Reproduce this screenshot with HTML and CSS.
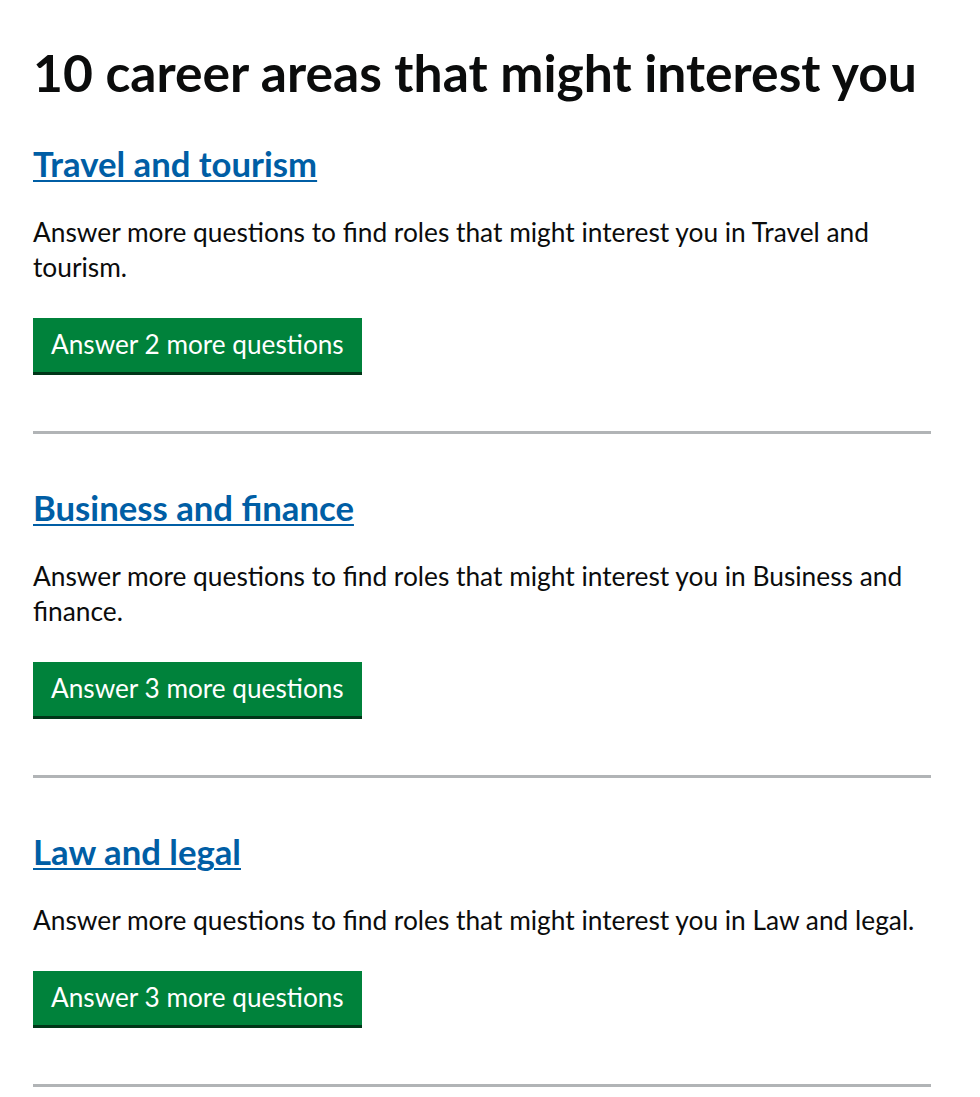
FILE: index.html
```html
<!DOCTYPE html>
<html lang="en">
<head>
<meta charset="utf-8">
<title>10 career areas that might interest you</title>
<link rel="stylesheet" href="styles.css">
</head>
<body>
<main class="page">
  <h1 class="title">10 career areas that might interest you</h1>

  <section class="area">
    <h2 class="area-heading"><a class="area-link" href="#">Travel and tourism</a></h2>
    <p class="area-text">Answer more questions to find roles that might interest you in Travel and tourism.</p>
    <a class="button" href="#">Answer 2 more questions</a>
  </section>
  <hr class="divider">

  <section class="area">
    <h2 class="area-heading"><a class="area-link" href="#">Business and finance</a></h2>
    <p class="area-text">Answer more questions to find roles that might interest you in Business and finance.</p>
    <a class="button" href="#">Answer 3 more questions</a>
  </section>
  <hr class="divider">

  <section class="area">
    <h2 class="area-heading"><a class="area-link" href="#">Law and legal</a></h2>
    <p class="area-text">Answer more questions to find roles that might interest you in Law and legal.</p>
    <a class="button" href="#">Answer 3 more questions</a>
  </section>
  <hr class="divider">
</main>
</body>
</html>
```

FILE: styles.css
```css
html, body {
  margin: 0;
  padding: 0;
  background: #ffffff;
}

body {
  font-family: Lato, "Liberation Sans", Arial, sans-serif;
  color: #0b0c0c;
}

.page {
  padding: 0 49px 0 33px;
  display: flex;
  flex-direction: column;
}

.title {
  font-size: 51.6px;
  line-height: 58px;
  font-weight: 700;
  margin: 43px 0 0;
}

.area {
  display: flex;
  flex-direction: column;
  align-items: flex-start;
  padding-top: 43px;
}

.divider + .area {
  padding-top: 54px;
}

.area-heading {
  font-size: 34.7px;
  line-height: 40px;
  font-weight: 700;
  margin: 0;
}

.area-link {
  color: #005ea5;
  text-decoration: underline;
  text-decoration-thickness: 2px;
  text-underline-offset: 3px;
}

.area-text {
  font-size: 26.3px;
  line-height: 35px;
  margin: 31px 0 33px;
}

.button {
  display: inline-block;
  background: #00823b;
  color: #ffffff;
  font-size: 26.2px;
  line-height: 35px;
  padding: 9px 18px 10px;
  text-decoration: none;
  box-shadow: 0 3px 0 #003618;
}

.divider {
  border: 0;
  height: 3px;
  background: #b1b4b6;
  margin: 59px 0 0;
  width: 100%;
}
```
